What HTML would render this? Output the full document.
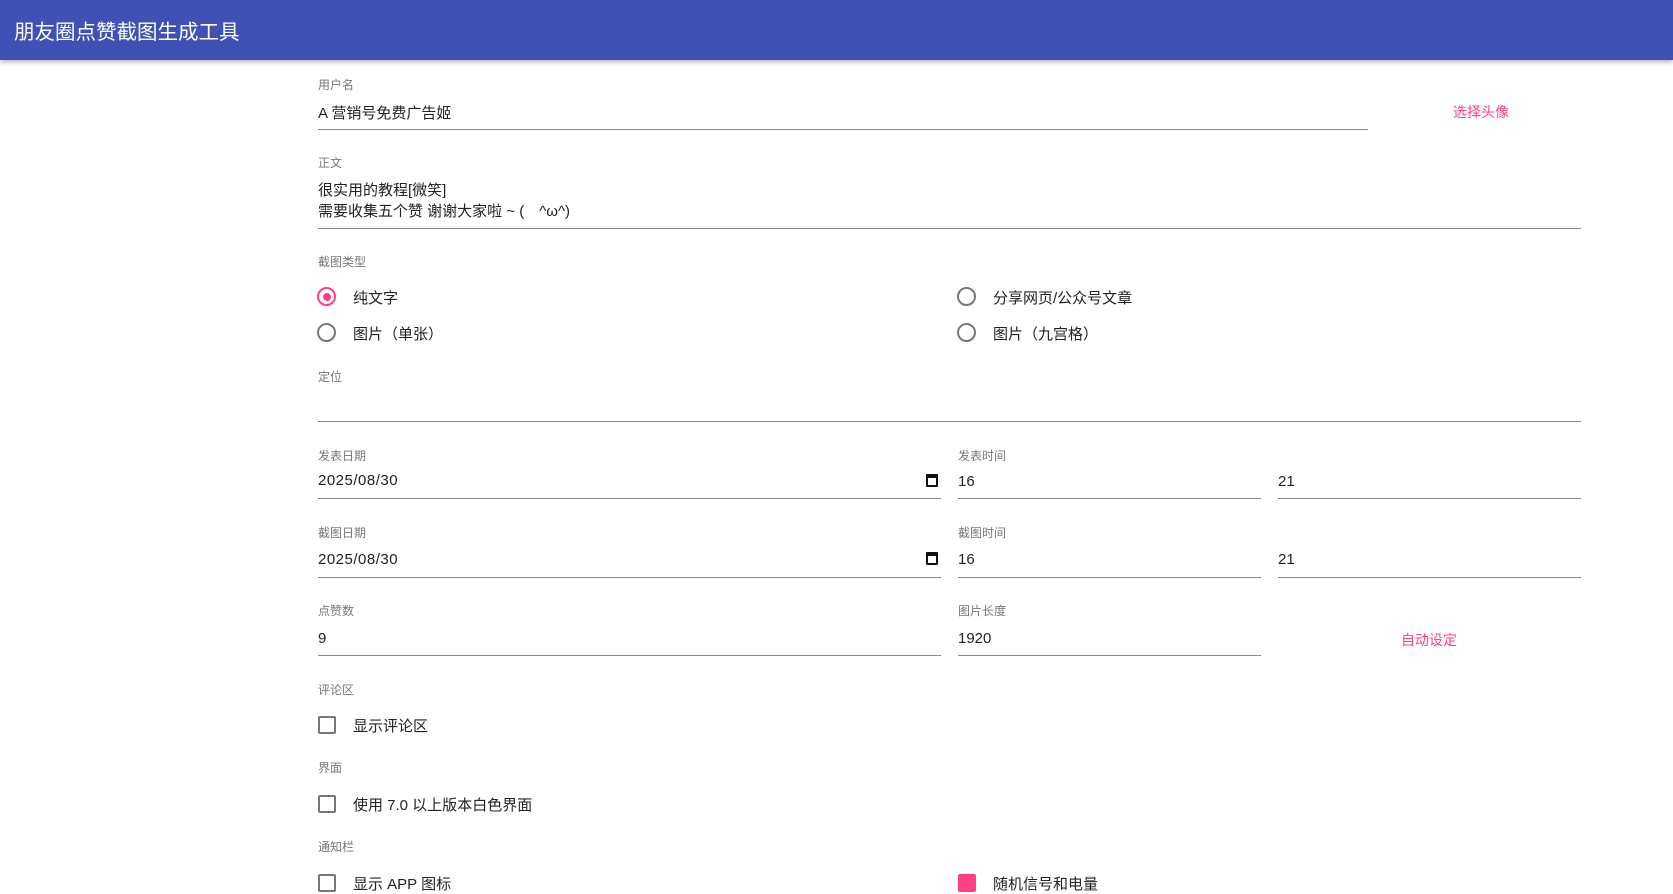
<!DOCTYPE html>
<html><head><meta charset="utf-8"><style>
*{margin:0;padding:0;box-sizing:border-box}
body{width:1673px;height:879px;overflow:hidden;background:#fff;font-family:"Liberation Sans","Noto Sans CJK SC",sans-serif;color:#222;position:relative}
.hdr{position:absolute;left:0;top:0;width:1673px;height:60px;background:#3f51b5;box-shadow:0 2px 5px rgba(0,0,0,.3)}
.hdr span{position:absolute;left:14px;top:15px;color:#fff;font-size:20.5px}
.a{position:absolute;white-space:nowrap}
.lb{font-size:12px;color:#777}
.v{font-size:15px;color:#222}
.ln{position:absolute;height:1px;background:#888}
.pk{color:#ff4081;font-size:14px}
.rd{position:absolute;width:19px;height:19px;border:2px solid #777;border-radius:50%}
.rd.on{border-color:#ff4081}
.rd.on:after{content:"";position:absolute;left:3.5px;top:3.5px;width:8px;height:8px;border-radius:50%;background:#ff4081}
.cb{position:absolute;width:18px;height:18px;border:2px solid #777;border-radius:2px}
</style></head><body>
<div class="hdr"><span>朋友圈点赞截图生成工具</span></div>

<div class="a lb" style="left:318px;top:76px">用户名</div>
<div class="a v" style="left:318px;top:102px">A 营销号免费广告姬</div>
<div class="ln" style="left:318px;top:129px;width:1050px"></div>
<div class="a pk" style="left:1453px;top:102px">选择头像</div>

<div class="a lb" style="left:318px;top:154px">正文</div>
<div class="a v" style="left:318px;top:180px;line-height:21px">很实用的教程[微笑]<br>需要收集五个赞 谢谢大家啦 ~ (　^ω^)</div>
<div class="ln" style="left:318px;top:228px;width:1263px"></div>

<div class="a lb" style="left:318px;top:253px">截图类型</div>
<div class="rd on" style="left:317px;top:287px"></div><div class="a v" style="left:353px;top:287px">纯文字</div>
<div class="rd" style="left:957px;top:287px"></div><div class="a v" style="left:993px;top:287px">分享网页/公众号文章</div>
<div class="rd" style="left:317px;top:323px"></div><div class="a v" style="left:353px;top:323px">图片（单张）</div>
<div class="rd" style="left:957px;top:323px"></div><div class="a v" style="left:993px;top:323px">图片（九宫格）</div>

<div class="a lb" style="left:318px;top:368px">定位</div>
<div class="ln" style="left:318px;top:421px;width:1263px"></div>

<div class="a lb" style="left:318px;top:447px">发表日期</div>
<div class="a v" style="left:318px;top:472px;letter-spacing:.5px">2025/08/30</div>
<div class="a" style="left:926px;top:474px;width:12px;height:13px;border:2px solid #111;border-top-width:4px;border-radius:1px"></div>
<div class="ln" style="left:318px;top:498px;width:623px"></div>
<div class="a lb" style="left:958px;top:447px">发表时间</div>
<div class="a v" style="left:958px;top:473px">16</div>
<div class="ln" style="left:958px;top:498px;width:303px"></div>
<div class="a v" style="left:1278px;top:473px">21</div>
<div class="ln" style="left:1278px;top:498px;width:303px"></div>

<div class="a lb" style="left:318px;top:524px">截图日期</div>
<div class="a v" style="left:318px;top:551px;letter-spacing:.5px">2025/08/30</div>
<div class="a" style="left:926px;top:552px;width:12px;height:13px;border:2px solid #111;border-top-width:4px;border-radius:1px"></div>
<div class="ln" style="left:318px;top:577px;width:623px"></div>
<div class="a lb" style="left:958px;top:524px">截图时间</div>
<div class="a v" style="left:958px;top:551px">16</div>
<div class="ln" style="left:958px;top:577px;width:303px"></div>
<div class="a v" style="left:1278px;top:551px">21</div>
<div class="ln" style="left:1278px;top:577px;width:303px"></div>

<div class="a lb" style="left:318px;top:602px">点赞数</div>
<div class="a v" style="left:318px;top:630px">9</div>
<div class="ln" style="left:318px;top:655px;width:623px"></div>
<div class="a lb" style="left:958px;top:602px">图片长度</div>
<div class="a v" style="left:958px;top:630px">1920</div>
<div class="ln" style="left:958px;top:655px;width:303px"></div>
<div class="a pk" style="left:1401px;top:630px">自动设定</div>

<div class="a lb" style="left:318px;top:681px">评论区</div>
<div class="cb" style="left:318px;top:716px"></div><div class="a v" style="left:353px;top:715px">显示评论区</div>

<div class="a lb" style="left:318px;top:759px">界面</div>
<div class="cb" style="left:318px;top:795px"></div><div class="a v" style="left:353px;top:794px">使用 7.0 以上版本白色界面</div>

<div class="a lb" style="left:318px;top:838px">通知栏</div>
<div class="cb" style="left:318px;top:874px"></div><div class="a v" style="left:353px;top:873px">显示 APP 图标</div>
<div class="cb" style="left:958px;top:874px;background:#ff4081;border-color:#ff4081"></div><div class="a v" style="left:993px;top:873px">随机信号和电量</div>
</body></html>
